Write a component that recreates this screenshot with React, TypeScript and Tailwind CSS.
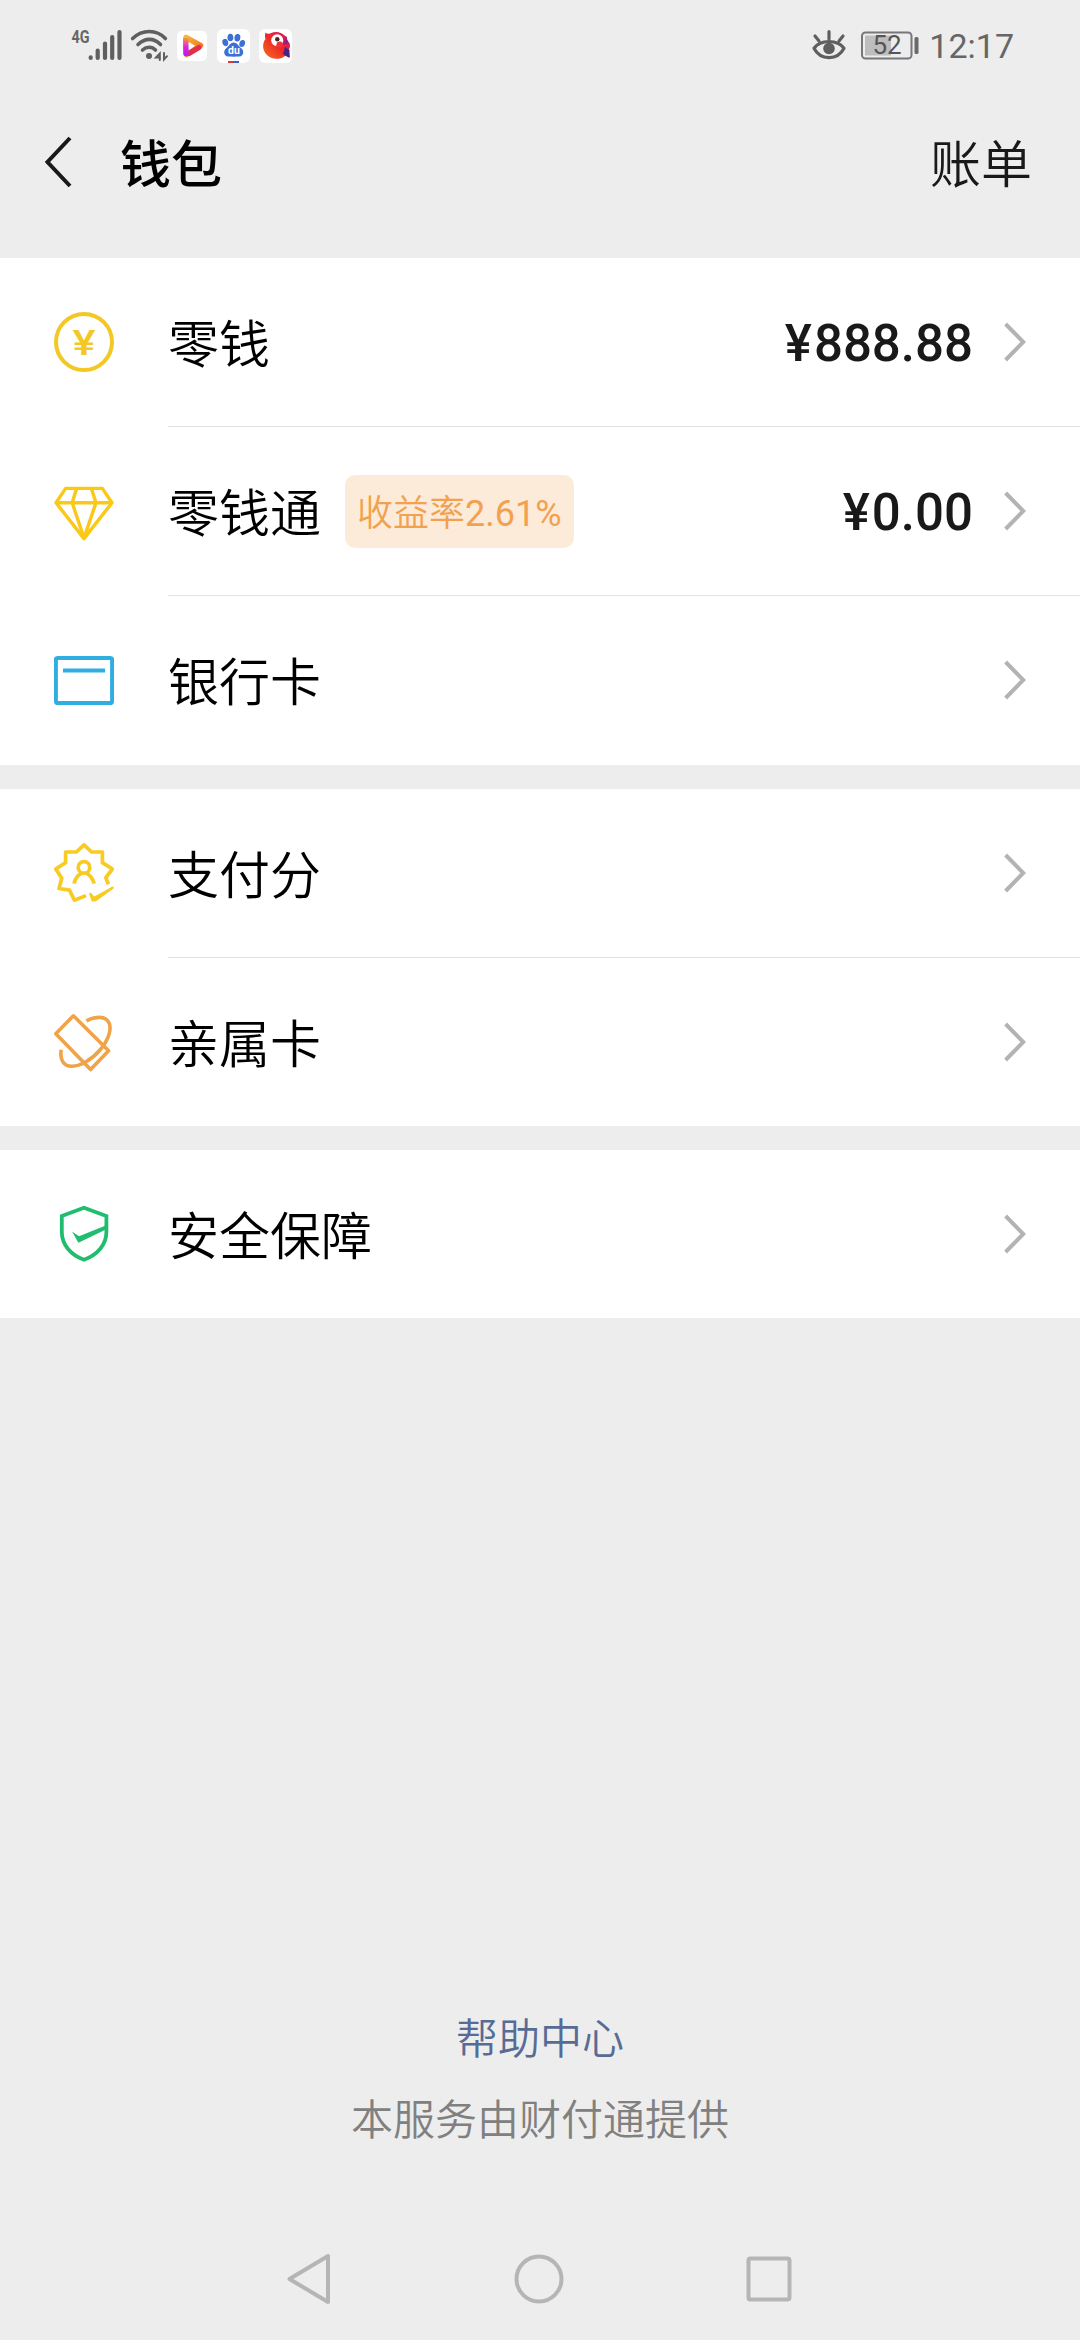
import type { ReactNode } from 'react';

interface RowProps {
  icon: ReactNode;
  label: string;
  rate?: string;
  amount?: string;
  divider?: boolean;
}

function CoinIcon() {
  return (
    <svg className="w-[60px] h-[60px]" viewBox="0 0 60 60" fill="none" stroke="#f3c825" strokeWidth="4">
      <circle cx="30" cy="30" r="28" />
      <text x="30" y="43" textAnchor="middle" textLength="23" lengthAdjust="spacingAndGlyphs" fontFamily="Roboto, sans-serif" fontSize="35" fontWeight="500" fill="#f3c825" stroke="none">¥</text>
    </svg>
  );
}

function DiamondIcon() {
  return (
    <svg className="w-[60px] h-[60px]" viewBox="0 0 60 60" fill="none" stroke="#fac918" strokeWidth="3.4" strokeLinejoin="round">
      <path d="M11.7 7.4H48.3L58 21.7L30 57.6L2 21.7Z" />
      <path d="M2 21.7H58M22.6 7.4L18.2 21.7L30 57L42 21.7L37.4 7.4" />
    </svg>
  );
}

function BankCardIcon() {
  return (
    <svg className="w-[60px] h-[60px]" viewBox="0 0 60 60" fill="none" stroke="#30aee2" strokeWidth="4">
      <rect x="1.9" y="8" width="56.2" height="45" rx="2" />
      <path d="M9 20.5H51" />
    </svg>
  );
}

function ScoreIcon() {
  return (
    <svg className="w-[60px] h-[60px]" viewBox="0 0 60 60" fill="none" stroke="#f8cb22" strokeWidth="3.7" strokeLinejoin="round">
      <path d="M54.4 41.2L51.8 34.6L58.4 26L48.4 19.6V9H37.6L30 1.8L22.4 9H11.6V19.6L1.8 26L7.8 35.3L5 45.5L15.6 47.2L20.4 57.2L32 52.6" />
      <circle cx="30" cy="24.4" r="5.8" />
      <path d="M20 40.6C21 35.6 24 32 28 29.8M40.2 40.6C39 35.6 36 32 32 29.8" />
      <path d="M36.4 51L40 55L58.6 44.8L41 57.4L38.6 57.4Z" fill="#f8cb22" strokeWidth="2.4" />
    </svg>
  );
}

function FamilyCardIcon() {
  return (
    <svg className="w-[60px] h-[60px]" viewBox="0 0 60 60" fill="none" stroke="#f0a347" strokeWidth="3.6" strokeLinejoin="round">
      <path d="M19.4 3.8L1.8 21.8L36.6 57.6L54.6 38.8Z" />
      <path d="M32.4 8.8C40 4.6 50 3.8 54 9C58.6 15.5 55 27.5 46 38C37 48.5 26 54 18 54.2C10 54.4 5.5 48 7.2 37.8" />
    </svg>
  );
}

function ShieldIcon() {
  return (
    <svg className="w-[60px] h-[60px]" viewBox="0 0 60 60" fill="none" stroke="#1fbd6d" strokeWidth="3.8">
      <path d="M30 3.8L52.4 12V28C52.4 41 43 51 30 55.8C17 51 7.8 41 7.8 28V12Z" />
      <path d="M18 27.5L25 32.2L53 21V25L24.4 38.8Z" fill="#1fbd6d" stroke="none" />
    </svg>
  );
}

function Chevron() {
  return (
    <svg className="w-[22px] h-[40px]" viewBox="0 0 22 40" fill="none" stroke="#b3b3b3" strokeWidth="4">
      <path d="M1.6 2L19.3 20L1.6 38" />
    </svg>
  );
}

function Row({ icon, label, rate, amount, divider }: RowProps) {
  return (
    <div className="flex pl-[54px] bg-white">
      <div className="flex items-center w-[114px] h-[168px] shrink-0">{icon}</div>
      <div className={`flex-1 ${divider ? 'border-b border-[#e2e2e2]' : ''}`}>
        <div className="flex items-center h-[168px] pr-[54px]">
          <span className="mt-2 text-[51px] leading-[60px] font-[350] text-black">{label}</span>
          {rate && (
            <span className="ml-6 mt-px h-[73px] px-3 pt-[5px] flex items-center rounded-[10px] bg-[#fdebda] text-[36px] leading-none font-[350] text-[#f1a14f]">
              收益率<span className="font-normal">{rate}</span>
            </span>
          )}
          <div className="flex items-center gap-[31px] ml-auto">
            {amount && (
              <span className="mt-[3px] text-[51px] leading-[60px] font-medium text-[#191919]">
                <span className="mr-[2px]">¥</span>
                {amount}
              </span>
            )}
            <Chevron />
          </div>
        </div>
      </div>
    </div>
  );
}

function StatusBar() {
  return (
    <div className="flex h-[90px] pl-[70px] pr-[66px]">
      <svg className="w-[54px] h-[90px]" viewBox="0 0 54 90">
        <text x="1.5" y="43" textLength="18" lengthAdjust="spacingAndGlyphs" fontFamily="Roboto, sans-serif" fontSize="18.5" fontWeight="700" fill="#666">4G</text>
        <g stroke="#5f5f5f" strokeWidth="4.2" strokeLinecap="round">
          <path d="M20.7 57.3V58M27.7 50.5V58M35 43.5V58M42.2 37V58M49.5 32V58" />
        </g>
      </svg>
      <svg className="w-[40px] h-[90px] ml-[6px]" viewBox="0 0 40 90" fill="none" stroke="#5f5f5f" strokeWidth="3.6" strokeLinecap="round">
        <path d="M2.6 38.5C12.5 29.2 26.5 29.2 35.4 38.5M8 44.5C15 37.7 24 37.7 30.5 44.5M12.5 50C16.5 46.3 22 46.3 25.5 50" />
        <circle cx="19" cy="56" r="3" fill="#5f5f5f" stroke="none" />
        <path d="M29.8 60V53.5L26 57.5H30M34 53V59.5L37 56.2" strokeWidth="2" />
      </svg>
      <svg className="w-[30px] h-[90px] ml-[7px]" viewBox="0 0 30 90">
        <defs>
          <linearGradient id="playTop" x1="0" y1="0" x2="1" y2="1">
            <stop offset="0" stopColor="#f7b733" />
            <stop offset="1" stopColor="#f2662e" />
          </linearGradient>
          <linearGradient id="playLeft" x1="0" y1="0" x2="0" y2="1">
            <stop offset="0" stopColor="#f59a37" />
            <stop offset="0.5" stopColor="#dd22e0" />
            <stop offset="1" stopColor="#b21df0" />
          </linearGradient>
        </defs>
        <rect y="31" width="30" height="30" rx="5" fill="#fff" />
        <path d="M9 37.5L23.5 45.5L9.5 54.5" fill="none" stroke="url(#playTop)" strokeWidth="5.5" strokeLinejoin="round" strokeLinecap="round" />
        <path d="M12 53.5L22 47.5" stroke="#e2304b" strokeWidth="5" strokeLinecap="round" />
        <path d="M6 38L11.4 38L11.7 53.5C11.7 57.2 6.2 57.2 6.2 53.5Z" fill="url(#playLeft)" />
        <path d="M12.5 42.5V49.5L17.5 46Z" fill="#fff" />
      </svg>
      <svg className="w-[33px] h-[90px] ml-[10px]" viewBox="0 0 33 90">
        <rect y="29" width="33" height="34" rx="6" fill="#fff" />
        <g fill="#3d6fd6">
          <ellipse cx="8.3" cy="42.5" rx="2.9" ry="3.7" transform="rotate(-15 8.3 42.5)" />
          <ellipse cx="13.4" cy="37.5" rx="2.9" ry="3.8" />
          <ellipse cx="20.4" cy="37.7" rx="2.9" ry="3.8" transform="rotate(10 20.4 37.7)" />
          <ellipse cx="25.2" cy="43.5" rx="2.8" ry="3.6" transform="rotate(15 25.2 43.5)" />
          <path d="M16.7 42.5C20 42.5 21.5 46 24.5 48.5C27.5 51.2 26.5 56.3 22.5 56.5C19 56.7 14.5 56.7 11 56.5C7 56.3 6 51.2 9 48.5C12 46 13.4 42.5 16.7 42.5Z" />
        </g>
        <text x="17" y="54" textAnchor="middle" fontFamily="Roboto, sans-serif" fontSize="10.5" fontWeight="700" fill="#fff">du</text>
        <path d="M11 62H16" stroke="#d43c35" strokeWidth="2" />
        <path d="M16 62H22" stroke="#3b5fc4" strokeWidth="2" />
      </svg>
      <svg className="w-[33px] h-[90px] ml-[9px]" viewBox="0 0 33 90">
        <defs>
          <linearGradient id="bird" x1="0" y1="1" x2="1" y2="0">
            <stop offset="0" stopColor="#f7701f" />
            <stop offset="0.5" stopColor="#ee2b26" />
            <stop offset="1" stopColor="#d3136d" />
          </linearGradient>
        </defs>
        <rect y="29" width="33" height="34" rx="6" fill="#fff" />
        <path d="M6.5 32.5C8 34 9.5 34 11.5 33.2C17 31 22 32 25.5 35.5L28 37L27.5 41L30.5 43C31.5 46 31 48 29.5 50L31 57L26 56C20 60.5 11 59.5 7 54C3 49 3.5 43 6.5 39C5.8 37 5.8 35 6.5 32.5Z" fill="url(#bird)" />
        <path d="M26 47L30.5 50L30.5 58L24 54Z" fill="#4a2188" />
        <path d="M27 37L24 45L30 43Z" fill="#9a1d86" />
        <circle cx="18.2" cy="40.3" r="6" fill="#fff" />
        <circle cx="18.3" cy="39.3" r="2.2" fill="#51251c" />
        <path d="M18 42.5C21 40 25 42 24 46C22 49 20 47 17 46Z" fill="#f0323e" />
      </svg>

      <svg className="w-[34px] h-[90px] ml-auto" viewBox="0 0 34 90" fill="none" stroke="#5f5f5f" strokeWidth="3.2" strokeLinecap="round">
        <path d="M2 48.3C8.5 39.5 25.5 39.5 32 48.3C25.5 60.8 8.5 60.8 2 48.3Z" strokeLinejoin="round" />
        <circle cx="17" cy="48.5" r="5.8" fill="#5f5f5f" stroke="none" />
        <path d="M17 31.5V39M3 36L7 41M31 36L27 41" />
      </svg>
      <svg className="w-[58px] h-[90px] ml-[15px]" viewBox="0 0 58 90">
        <rect x="1" y="32.5" width="49.5" height="26" rx="3.5" fill="none" stroke="#777" strokeWidth="2" />
        <rect x="4" y="35.5" width="26" height="20" fill="#bdbdbd" />
        <rect x="53.5" y="37" width="4" height="17" rx="1.5" fill="#6a6a6a" />
        <text x="26" y="54" textAnchor="middle" fontFamily="Roboto, sans-serif" fontSize="26" fill="#555">52</text>
      </svg>
      <span className="pt-[26px] ml-[10px] text-[34px] leading-[40px] text-[#666]">12:17</span>
    </div>
  );
}

export default function App() {
  return (
    <div className="flex flex-col w-[1080px] h-[2340px] bg-[#ededed] overflow-hidden font-[Roboto,'Noto_Sans_CJK_SC',sans-serif]">
      <StatusBar />
      <header className="flex items-center h-[168px] pl-[44px] pr-[48px] pb-6">
        <svg className="w-[30px] h-[52px]" viewBox="0 0 30 52" fill="none" stroke="#191919" strokeWidth="4">
          <path d="M26 2L3.5 26L26 50" />
        </svg>
        <h1 className="mt-2 ml-[46px] text-[51px] leading-[60px] font-medium text-black">钱包</h1>
        <span className="mt-2 ml-auto text-[51px] leading-[60px] font-[350] text-[#191919]">账单</span>
      </header>

      <main className="flex flex-col gap-6">
        <section className="pb-px bg-white">
          <Row icon={<CoinIcon />} label="零钱" amount="888.88" divider />
          <Row icon={<DiamondIcon />} label="零钱通" rate="2.61%" amount="0.00" divider />
          <Row icon={<BankCardIcon />} label="银行卡" />
        </section>
        <section>
          <Row icon={<ScoreIcon />} label="支付分" divider />
          <Row icon={<FamilyCardIcon />} label="亲属卡" />
        </section>
        <section>
          <Row icon={<ShieldIcon />} label="安全保障" />
        </section>
      </main>

      <footer className="flex flex-col items-center mt-auto">
        <a className="text-[42px] leading-[60px] font-[350] text-[#576b95]">帮助中心</a>
        <p className="mt-[21px] text-[42px] leading-[60px] font-[350] text-[#808080]">本服务由财付通提供</p>
        <nav className="flex items-center justify-between w-full mt-[67px] h-[122px] pl-[286px] pr-[288px]">
          <svg className="w-[46px] h-[52px]" viewBox="0 0 46 52" fill="none" stroke="#b5b5b5" strokeWidth="4" strokeLinejoin="round">
            <path d="M42 3V49L3.5 26Z" />
          </svg>
          <svg className="w-[50px] h-[50px]" viewBox="0 0 50 50" fill="none" stroke="#b5b5b5" strokeWidth="4">
            <circle cx="25" cy="25" r="22.5" />
          </svg>
          <svg className="w-[46px] h-[46px]" viewBox="0 0 46 46" fill="none" stroke="#b5b5b5" strokeWidth="4">
            <rect x="2.5" y="2.5" width="41" height="41" rx="2" />
          </svg>
        </nav>
      </footer>
    </div>
  );
}
